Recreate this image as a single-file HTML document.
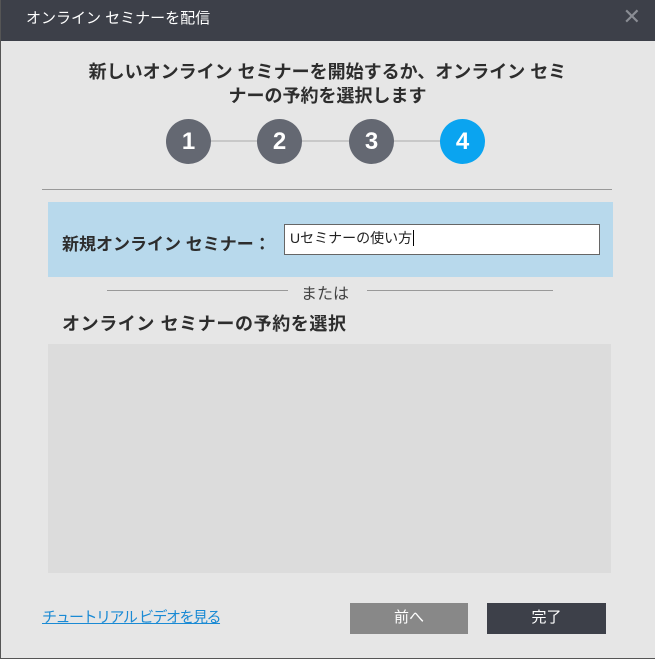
<!DOCTYPE html>
<html><head><meta charset="utf-8"><style>
*{margin:0;padding:0;box-sizing:border-box}
body{width:655px;height:659px;background:#e6e6e6;font-family:"Liberation Sans","Noto Sans CJK JP",sans-serif;position:relative;overflow:hidden;color:#333}
.frame{position:absolute;left:0;top:0;width:655px;height:659px;border:1px solid #555;border-top:none;border-right:none}
.tb{position:absolute;left:0;top:0;width:655px;height:41px;background:#3d4049;color:#fff;font-size:15px;line-height:38px;padding-left:26px}
.x{position:absolute;right:14px;top:5px;color:#8a8d94;font-size:22px;line-height:24px}
.abs{position:absolute}
h1{position:absolute;left:0;width:655px;top:60px;text-align:center;font-size:18px;line-height:24px;font-weight:bold;color:#2d2d2d}
.c{position:absolute;width:45px;height:45px;border-radius:50%;background:#646872;color:#fff;font-weight:bold;font-size:24px;text-align:center;line-height:45px;top:119px}
.ln{position:absolute;top:140px;height:2px;background:#c8c8c8}
</style></head><body>
<div class="tb">オンライン セミナーを配信<span class="x">✕</span></div>
<div class="frame"></div>
<h1>新しいオンライン セミナーを開始するか、オンライン セミ<br>ナーの予約を選択します</h1>
<div class="ln" style="left:190px;width:270px"></div>
<div class="c" style="left:166px">1</div>
<div class="c" style="left:257px">2</div>
<div class="c" style="left:349px">3</div>
<div class="c" style="left:440px;background:#0aa4f0">4</div>
<div class="abs" style="left:42px;top:189px;width:570px;height:1px;background:#999"></div>
<div class="abs" style="left:48px;top:202px;width:565px;height:75px;background:#b8d9ec"></div>
<div class="abs" style="left:62px;top:230px;font-size:17px;font-weight:bold;color:#2d2d2d">新規オンライン セミナー：</div>
<div class="abs" style="left:284px;top:224px;width:316px;height:31px;background:#fff;border:1px solid #666;font-size:14px;line-height:27px;padding-left:5px;color:#222">Uセミナーの使い方<span style="border-left:1px solid #000;margin-left:1px"></span></div>
<div class="abs" style="left:107px;top:290px;width:181px;height:1px;background:#999"></div>
<div class="abs" style="left:367px;top:290px;width:186px;height:1px;background:#999"></div>
<div class="abs" style="left:301px;top:280px;font-size:16px;color:#444">または</div>
<div class="abs" style="left:62px;top:310px;font-size:18px;letter-spacing:0.6px;font-weight:bold;color:#2d2d2d">オンライン セミナーの予約を選択</div>
<div class="abs" style="left:48px;top:344px;width:563px;height:229px;background:#dcdcdc"></div>
<div class="abs" style="left:42px;top:606px;font-size:15px;letter-spacing:-1.5px;color:#1a8ad4;text-decoration:underline">チュートリアル ビデオを見る</div>
<div class="abs" style="left:350px;top:603px;width:118px;height:31px;background:#888;color:#fff;font-size:15px;text-align:center;line-height:30px">前へ</div>
<div class="abs" style="left:487px;top:603px;width:119px;height:31px;background:#3d4049;color:#fff;font-size:15px;text-align:center;line-height:30px">完了</div>
</body></html>
